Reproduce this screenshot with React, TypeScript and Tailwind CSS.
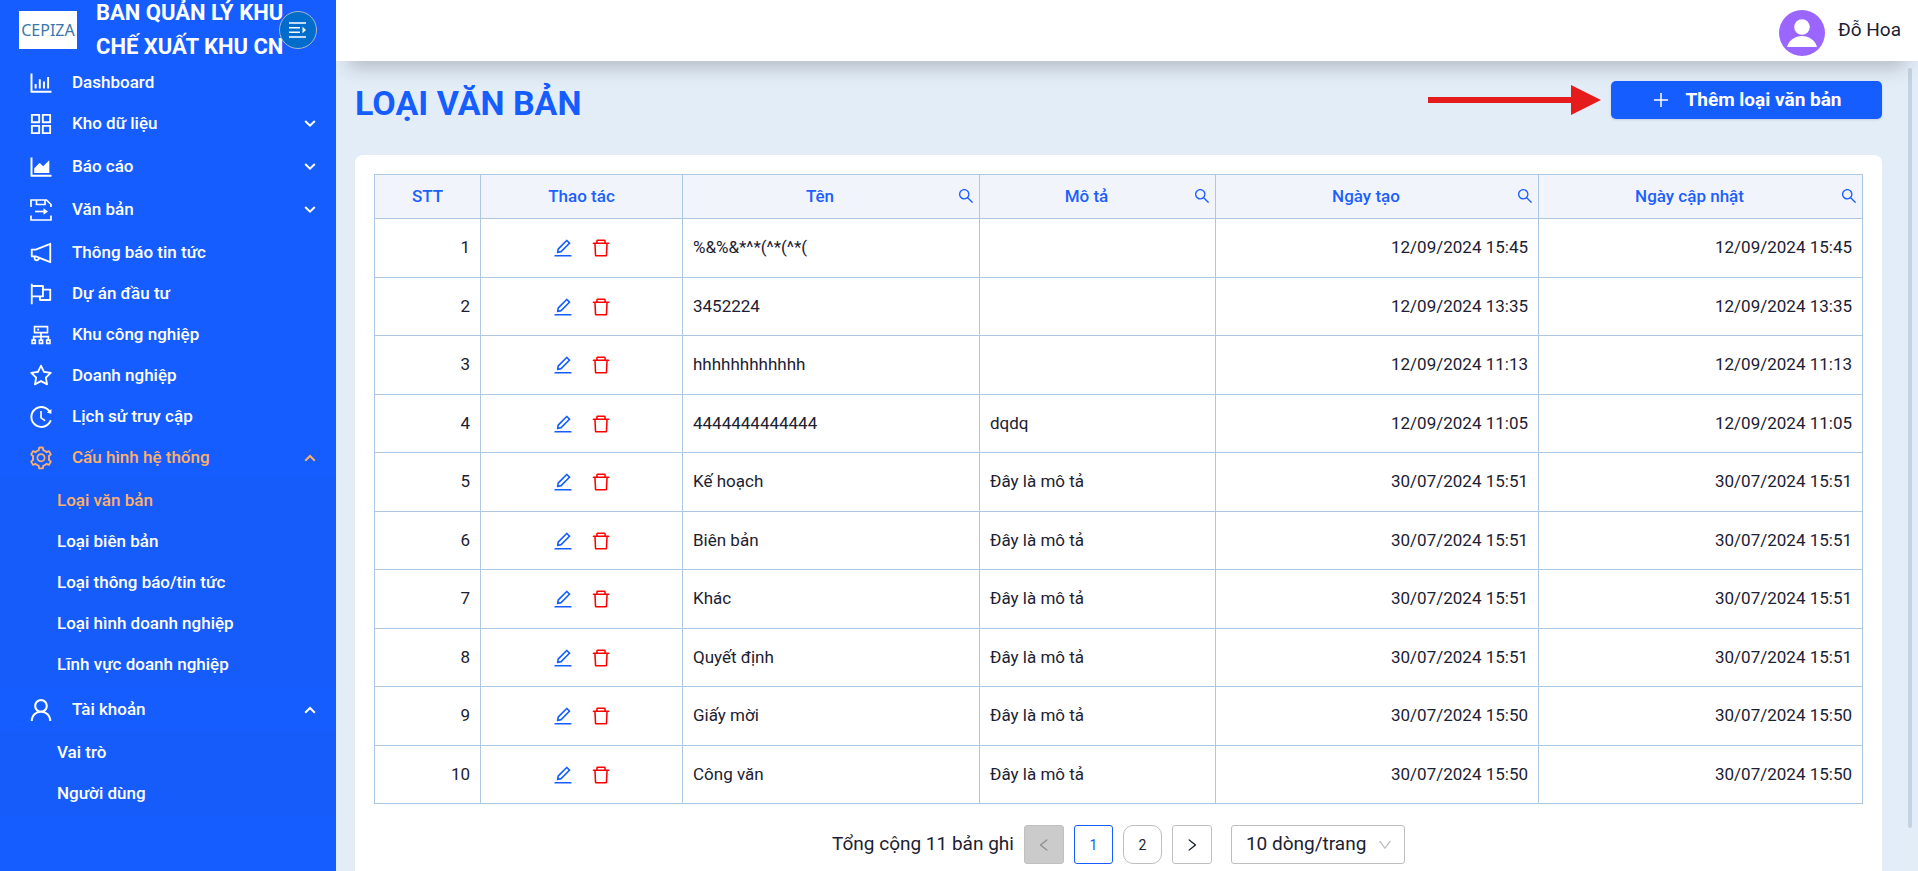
import React from 'react';
import {
  AiOutlineAppstore,
  AiOutlineAreaChart,
  AiOutlineBarChart,
  AiOutlineCluster,
  AiOutlineDelete,
  AiOutlineDown,
  AiOutlineEdit,
  AiOutlineFlag,
  AiOutlineHistory,
  AiOutlineLeft,
  AiOutlineNotification,
  AiOutlinePlus,
  AiOutlineRight,
  AiOutlineSearch,
  AiOutlineSetting,
  AiOutlineStar,
  AiOutlineUser,
} from 'react-icons/ai';
import clsx from 'clsx';

interface MenuItem {
  label: string;
  icon: React.ReactNode;
  active?: boolean;
  expandable?: boolean;
  children?: { label: string; active?: boolean }[];
}

interface DocumentType {
  name: string;
  description: string;
  date: string;
}

const DocumentIcon: React.FC = () => (
  <svg width="22" height="22" viewBox="0 0 22 22" fill="none" stroke="currentColor" strokeWidth="1.7">
    <path d="M1 8V1h15.500L21 5.500V8" />
    <path d="M6.500 1v4.500h8.500V1" />
    <path d="M1 16.500V21h20v-4.500" />
    <path d="M5 12.500h10" />
    <path d="M13.500 9.300l4.500 3.200-4.500 3.200z" fill="currentColor" stroke="none" />
  </svg>
);

const menu: MenuItem[] = [
  { label: 'Dashboard', icon: <AiOutlineBarChart size={28} /> },
  { label: 'Kho dữ liệu', icon: <AiOutlineAppstore size={28} />, expandable: true },
  { label: 'Báo cáo', icon: <AiOutlineAreaChart size={28} />, expandable: true },
  { label: 'Văn bản', icon: <DocumentIcon />, expandable: true },
  { label: 'Thông báo tin tức', icon: <AiOutlineNotification size={26} /> },
  { label: 'Dự án đầu tư', icon: <AiOutlineFlag size={26} /> },
  { label: 'Khu công nghiệp', icon: <AiOutlineCluster size={26} /> },
  { label: 'Doanh nghiệp', icon: <AiOutlineStar size={26} /> },
  { label: 'Lịch sử truy cập', icon: <AiOutlineHistory size={26} /> },
  {
    label: 'Cấu hình hệ thống',
    icon: <AiOutlineSetting size={26} />,
    active: true,
    expandable: true,
    children: [
      { label: 'Loại văn bản', active: true },
      { label: 'Loại biên bản' },
      { label: 'Loại thông báo/tin tức' },
      { label: 'Loại hình doanh nghiệp' },
      { label: 'Lĩnh vực doanh nghiệp' },
    ],
  },
  {
    label: 'Tài khoản',
    icon: <AiOutlineUser size={28} />,
    expandable: true,
    children: [{ label: 'Vai trò' }, { label: 'Người dùng' }],
  },
];

const columns = [
  { title: 'STT', width: 'w-[106px]', searchable: false },
  { title: 'Thao tác', width: 'w-[202px]', searchable: false },
  { title: 'Tên', width: 'w-[297px]', searchable: true },
  { title: 'Mô tả', width: 'w-[236px]', searchable: true },
  { title: 'Ngày tạo', width: 'w-[323px]', searchable: true },
  { title: 'Ngày cập nhật', width: 'w-[324px]', searchable: true },
];

const rows: DocumentType[] = [
  { name: '%&%&*^*(^*(^*(', description: '', date: '12/09/2024 15:45' },
  { name: '3452224', description: '', date: '12/09/2024 13:35' },
  { name: 'hhhhhhhhhhhh', description: '', date: '12/09/2024 11:13' },
  { name: '4444444444444', description: 'dqdq', date: '12/09/2024 11:05' },
  { name: 'Kế hoạch', description: 'Đây là mô tả', date: '30/07/2024 15:51' },
  { name: 'Biên bản', description: 'Đây là mô tả', date: '30/07/2024 15:51' },
  { name: 'Khác', description: 'Đây là mô tả', date: '30/07/2024 15:51' },
  { name: 'Quyết định', description: 'Đây là mô tả', date: '30/07/2024 15:51' },
  { name: 'Giấy mời', description: 'Đây là mô tả', date: '30/07/2024 15:50' },
  { name: 'Công văn', description: 'Đây là mô tả', date: '30/07/2024 15:50' },
];

const MenuChevron: React.FC<{ open: boolean }> = ({ open }) => (
  <svg width="12" height="12" viewBox="0 0 12 12" fill="none" stroke="currentColor" strokeWidth="2">
    <path d={open ? 'M1.200 8.700L6 4l4.800 4.700' : 'M1.200 3L6 7.700 10.800 3'} />
  </svg>
);

const Sidebar: React.FC = () => (
  <aside className="relative z-20 w-[336px] shrink-0 bg-[#155dff] text-white">
    <div className="relative flex h-[59px] items-center pl-[19px]">
      <div className="flex h-[38px] w-[58px] shrink-0 items-center justify-center bg-white font-['Noto_Sans',sans-serif] text-base text-[#3a78ab]">
        CEPIZA
      </div>
      <div className="ml-[19px] text-[22px] leading-[34px] font-bold whitespace-nowrap">
        BAN QUẢN LÝ KHU
        <br />
        CHẾ XUẤT KHU CN
      </div>
      <button
        aria-label="Thu gọn menu"
        className="absolute top-[11px] right-[19px] flex h-[38px] w-[38px] items-center justify-center rounded-full border border-[#a9b9c6] bg-[#006dcc]"
      >
        <svg width="18" height="16" viewBox="0 0 18 16" fill="none" stroke="currentColor" strokeWidth="1.600">
          <path d="M0 1h17M0 5.700h11M0 10.300h11M0 15h17" />
          <path d="M13.500 4.800L17 8l-3.500 3.200z" fill="currentColor" stroke="none" />
        </svg>
      </button>
    </div>

    <nav className="pt-[3px] text-[17px] font-medium">
      <ul>
        {menu.map((item) => (
          <li key={item.label} className={clsx(item.expandable && !item.children && 'mb-0.5')}>
            <button
              className={clsx(
                'flex h-[41px] w-full items-center pr-5 pl-[27px] text-left',
                item.active && 'text-[#ffb066]',
              )}
            >
              <span className="flex w-7 justify-center">{item.icon}</span>
              <span className="ml-[17px] flex-1">{item.label}</span>
              {item.expandable && <MenuChevron open={!!item.children} />}
            </button>
            {item.children && (
              <ul className="mb-0.5 bg-[#165cfb] py-0.5">
                {item.children.map((child) => (
                  <li key={child.label}>
                    <a
                      href="#"
                      className={clsx('flex h-[41px] items-center pl-[57px]', child.active && 'text-[#ffb066]')}
                    >
                      {child.label}
                    </a>
                  </li>
                ))}
              </ul>
            )}
          </li>
        ))}
      </ul>
    </nav>
  </aside>
);

const Header: React.FC = () => (
  <header className="relative z-10 flex h-[61px] shrink-0 items-center justify-end gap-[13px] bg-white pt-1 pr-[17px] shadow-[0_18px_20px_-12px_rgba(0,0,0,0.22)]">
    <svg width="46" height="46" viewBox="0 0 46 46">
      <circle cx="23" cy="23" r="23" fill="#9b66ff" />
      <circle cx="23" cy="17" r="7.800" fill="#fff" />
      <path d="M8 37c2-7 8-11 15-11s13 4 15 11z" fill="#fff" />
    </svg>
    <span className="pb-1 text-[19px]">Đỗ Hoa</span>
  </header>
);

const DocumentTable: React.FC = () => (
  <table className="w-full table-fixed border-collapse text-[17px]">
    <thead>
      <tr className="h-11 bg-[#f1f5fb] text-[#1d5fff]">
        {columns.map((column) => (
          <th
            key={column.title}
            className={clsx(
              'relative border border-[#adc8e2] font-medium',
              column.searchable ? 'pr-8 pl-2.5' : 'px-2.5',
              column.width,
            )}
          >
            {column.title}
            {column.searchable && (
              <button aria-label={`Tìm theo ${column.title}`} className="absolute top-3 right-1">
                <AiOutlineSearch size={18} />
              </button>
            )}
          </th>
        ))}
      </tr>
    </thead>
    <tbody>
      {rows.map((row, index) => (
        <tr key={index} className="odd:h-[59px] even:h-[58px]">
          <td className="border border-[#adc8e2] px-2.5 text-right">{index + 1}</td>
          <td className="border border-[#adc8e2] px-2.5">
            <div className="flex justify-center gap-4">
              <button aria-label="Sửa" className="text-[#155dff]">
                <AiOutlineEdit size={22} />
              </button>
              <button aria-label="Xóa" className="text-[#ff0000]">
                <AiOutlineDelete size={22} />
              </button>
            </div>
          </td>
          <td className="border border-[#adc8e2] px-2.5">{row.name}</td>
          <td className="border border-[#adc8e2] px-2.5">{row.description}</td>
          <td className="border border-[#adc8e2] px-2.5 text-right">{row.date}</td>
          <td className="border border-[#adc8e2] px-2.5 text-right">{row.date}</td>
        </tr>
      ))}
    </tbody>
  </table>
);

const Pagination: React.FC = () => (
  <div className="mt-[21px] flex items-center justify-center gap-2.5">
    <span className="text-[19px]">Tổng cộng 11 bản ghi</span>
    <button
      disabled
      aria-label="Trang trước"
      className="flex h-[39px] w-10 items-center justify-center rounded-[3px] border border-[#c0c0c0] bg-[#cbcbcb] text-[#8f8f8f]"
    >
      <AiOutlineLeft size={16} />
    </button>
    <button className="h-[39px] w-[39px] rounded-[3px] border border-[#155dff] text-sm text-[#155dff]">1</button>
    <button className="h-[39px] w-[39px] rounded-[10px] border border-[#bdbdc2] text-sm">2</button>
    <button
      aria-label="Trang sau"
      className="flex h-[39px] w-10 items-center justify-center rounded-[3px] border border-[#bdbdc2]"
    >
      <AiOutlineRight size={16} />
    </button>
    <div className="relative ml-[9px]">
      <select
        aria-label="Số dòng mỗi trang"
        className="h-[39px] w-[174px] appearance-none rounded-[3px] border border-[#bdbdc2] bg-white pl-3.5 text-[19px]"
      >
        <option>10 dòng/trang</option>
      </select>
      <AiOutlineDown size={16} className="pointer-events-none absolute top-3 right-3 text-[#bfbfbf]" />
    </div>
  </div>
);

export default function App() {
  return (
    <div className="flex h-screen overflow-hidden bg-[#e3edf8] font-['Roboto',sans-serif] text-[#1b2132]">
      <Sidebar />
      <div className="flex min-w-0 flex-1 flex-col">
        <Header />
        <main className="relative flex-1 overflow-hidden pr-9 pl-[19px]">
          <div className="flex items-start justify-between pt-5">
            <h1 className="text-[34px] leading-[44px] font-bold text-[#155dff]">LOẠI VĂN BẢN</h1>
            <div className="flex items-center gap-2.5">
              <svg width="173" height="30" viewBox="0 0 173 30" fill="#e61b1b">
                <path d="M0 12h143V0l30 15-30 15V18H0z" />
              </svg>
              <button className="flex h-[38px] w-[271px] items-center justify-center gap-3.5 rounded-[5px] bg-[#155dff] text-[19px] font-bold text-white shadow-sm">
                <AiOutlinePlus size={20} />
                Thêm loại văn bản
              </button>
            </div>
          </div>

          <section className="mt-[30px] rounded-lg bg-white p-[19px]">
            <DocumentTable />
            <Pagination />
          </section>

          {/* Scroll thumb */}
          <div className="absolute top-[7px] right-1.5 bottom-[43px] w-1 rounded-full bg-[#c4d3e1]" />
        </main>
      </div>
    </div>
  );
}
